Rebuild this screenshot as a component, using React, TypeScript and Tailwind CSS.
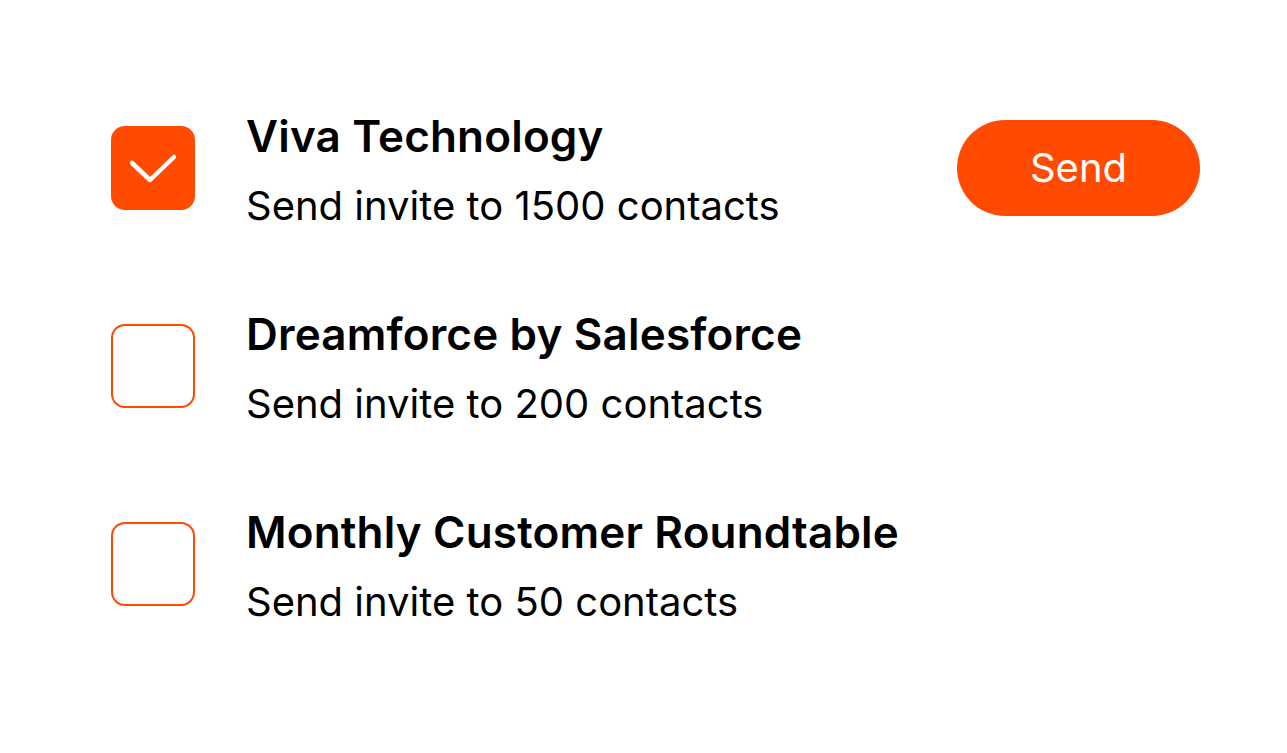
type Event = {
  name: string;
  contacts: number;
  checked: boolean;
};

const events: Event[] = [
  { name: "Viva Technology", contacts: 1500, checked: true },
  { name: "Dreamforce by Salesforce", contacts: 200, checked: false },
  { name: "Monthly Customer Roundtable", contacts: 50, checked: false },
];

function CheckBox({ checked }: { checked: boolean }) {
  if (checked) {
    return (
      <div className="h-[84px] w-[84px] shrink-0 rounded-[14px] bg-[#ff4a00]">
        <svg width="84" height="84" viewBox="0 0 84 84" fill="none">
          <path d="M21 37 L39 54 L63 31" stroke="white" strokeWidth="4.5" strokeLinecap="round" strokeLinejoin="round" />
        </svg>
      </div>
    );
  }
  return <div className="h-[84px] w-[84px] shrink-0 rounded-[14px] border-[2.5px] border-[#ff4a00]" />;
}

export default function App() {
  return (
    <div className="h-[753px] w-full bg-white" style={{ fontFamily: "Inter, 'Noto Sans', sans-serif" }}>
      <div className="flex flex-col gap-[114px] pl-[111px] pr-[87px] pt-[126px]">
        {events.map((ev) => (
          <div key={ev.name} className="flex h-[84px] items-center">
            <CheckBox checked={ev.checked} />
            <div className="ml-[51px] flex flex-1 flex-col self-start mt-[-12px]">
              <div className="text-[44px] font-semibold leading-[44px] tracking-[0.004em] text-black">{ev.name}</div>
              <div className="mt-[28px] text-[40px] leading-[40px] text-black">Send invite to {ev.contacts} contacts</div>
            </div>
            {ev.checked && (
              <button className="flex h-[96px] w-[243px] shrink-0 items-center justify-center rounded-full bg-[#ff4a00] text-[40px] text-white">
                Send
              </button>
            )}
          </div>
        ))}
      </div>
    </div>
  );
}
